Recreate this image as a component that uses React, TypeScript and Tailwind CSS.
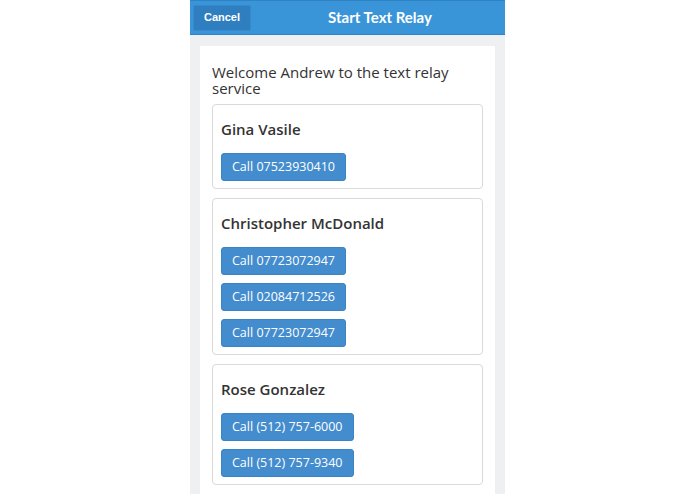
import React from "react";

const contacts = [
  { name: "Gina Vasile", numbers: ["07523930410"] },
  { name: "Christopher McDonald", numbers: ["07723072947", "02084712526", "07723072947"] },
  { name: "Rose Gonzalez", numbers: ["(512) 757-6000", "(512) 757-9340"] },
];

function ContactCard({ name, numbers }: { name: string; numbers: string[] }) {
  return (
    <div className="rounded-[4px] border border-[#d9d9d9] bg-white px-[8px] pb-[7px] pt-[14px]">
      <h4 className="text-[15px] font-semibold leading-[20px] text-[#333]">{name}</h4>
      <div className="mt-[14px] flex flex-col items-start gap-[8px]">
        {numbers.map((n, i) => (
          <button
            key={i}
            className="flex h-[28px] items-center rounded-[3px] border border-[#3a83c4] bg-[#438cce] px-[10px] text-[12.5px] text-white"
          >
            Call {n}
          </button>
        ))}
      </div>
    </div>
  );
}

export default function App() {
  return (
    <div className="flex h-screen justify-center overflow-hidden bg-white font-['Open_Sans',sans-serif]">
      <div className="flex w-[315px] flex-col bg-[#eff0f1]">
        <header className="flex h-[35px] shrink-0 items-center border-y border-[#2f82c4] bg-[#3a95d8] pl-[3px]">
          <button className="flex h-[26px] w-[58px] items-center justify-center rounded-[2px] border border-[#3689cb] bg-[#2f7fc0] font-['Liberation_Sans',sans-serif] text-[11px] font-bold text-white">
            Cancel
          </button>
          <h1 className="flex-1 pl-[4px] text-center font-['Lato',sans-serif] text-[15px] font-bold text-white">
            Start Text Relay
          </h1>
        </header>
        <div className="flex-1 px-[10px] pt-[11px]">
          <main className="bg-white px-[12px] pt-[18px]">
            <p className="mb-[8px] text-[15px] leading-[16px] text-[#333]">
              Welcome Andrew to the text relay service
            </p>
            <div className="flex flex-col gap-[9px]">
              {contacts.map((c) => (
                <ContactCard key={c.name} name={c.name} numbers={c.numbers} />
              ))}
              <div className="h-[120px] rounded-[4px] border border-[#d9d9d9] bg-white" />
            </div>
          </main>
        </div>
      </div>
    </div>
  );
}
